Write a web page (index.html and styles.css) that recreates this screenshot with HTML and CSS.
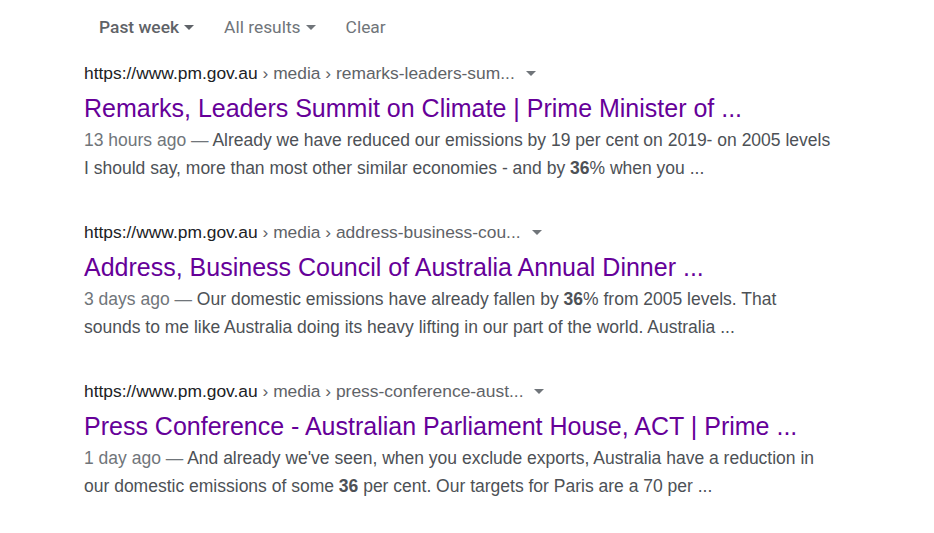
FILE: index.html
```html
<!DOCTYPE html>
<html>
<head>
<meta charset="utf-8">
<link rel="stylesheet" href="styles.css">
</head>
<body>
<div class="page">
  <div class="filters">
    <span class="filter active">Past week<span class="caret"></span></span>
    <span class="filter">All results<span class="caret"></span></span>
    <span class="filter clear">Clear</span>
  </div>
  <div class="results">
    <div class="result">
      <div class="url"><span class="domain">https://www.pm.gov.au</span><span class="crumbs"> › media › remarks-leaders-sum...</span><span class="ucaret"></span></div>
      <div class="title">Remarks, Leaders Summit on Climate | Prime Minister of ...</div>
      <div class="snippet"><span class="date">13 hours ago — </span>Already we have reduced our emissions by 19 per cent on 2019- on 2005 levels I should say, more than most other similar economies - and by <b>36</b>% when you ...</div>
    </div>
    <div class="result">
      <div class="url"><span class="domain">https://www.pm.gov.au</span><span class="crumbs"> › media › address-business-cou...</span><span class="ucaret"></span></div>
      <div class="title">Address, Business Council of Australia Annual Dinner ...</div>
      <div class="snippet"><span class="date">3 days ago — </span>Our domestic emissions have already fallen by <b>36</b>% from 2005 levels. That sounds to me like Australia doing its heavy lifting in our part of the world. Australia ...</div>
    </div>
    <div class="result">
      <div class="url"><span class="domain">https://www.pm.gov.au</span><span class="crumbs"> › media › press-conference-aust...</span><span class="ucaret"></span></div>
      <div class="title">Press Conference - Australian Parliament House, ACT | Prime ...</div>
      <div class="snippet"><span class="date">1 day ago — </span>And already we've seen, when you exclude exports, Australia have a reduction in our domestic emissions of some <b>36</b> per cent. Our targets for Paris are a 70 per ...</div>
    </div>
  </div>
</div>
</body>
</html>
```
FILE: styles.css
```css
html, body {
  margin: 0;
  padding: 0;
  background: #ffffff;
}
body {
  font-family: "Liberation Sans", Arial, sans-serif;
}
.page {
  padding: 0 0 0 84px;
  width: 752px;
}
.filters {
  display: flex;
  align-items: center;
  gap: 30px;
  padding-left: 15px;
  height: 54px;
  font-family: Roboto, "Liberation Sans", sans-serif;
  font-size: 17.4px;
  color: #70757a;
}
.filter {
  display: flex;
  align-items: center;
}
.filter.active {
  font-weight: 500;
  color: #5f6368;
}
.caret {
  display: inline-block;
  width: 0;
  height: 0;
  margin-left: 5px;
  border-left: 5px solid transparent;
  border-right: 5px solid transparent;
  border-top: 5px solid currentColor;
}
.results {
  display: flex;
  flex-direction: column;
  gap: 38px;
  padding-top: 7px;
}
.result {
  display: flex;
  flex-direction: column;
}
.url {
  font-size: 17.4px;
  line-height: 24px;
  color: #202124;
  display: flex;
  align-items: center;
}
.crumbs {
  color: #5f6368;
  white-space: pre;
}
.ucaret {
  display: inline-block;
  width: 0;
  height: 0;
  margin-left: 11px;
  border-left: 5px solid transparent;
  border-right: 5px solid transparent;
  border-top: 5px solid #70757a;
}
.title {
  font-size: 25px;
  line-height: 36px;
  color: #660099;
  margin-top: 5px;
}
.snippet {
  font-size: 17.5px;
  line-height: 28px;
  color: #4d5156;
  margin-top: 0;
}
.snippet b {
  font-weight: bold;
}
.date {
  color: #70757a;
}
```
